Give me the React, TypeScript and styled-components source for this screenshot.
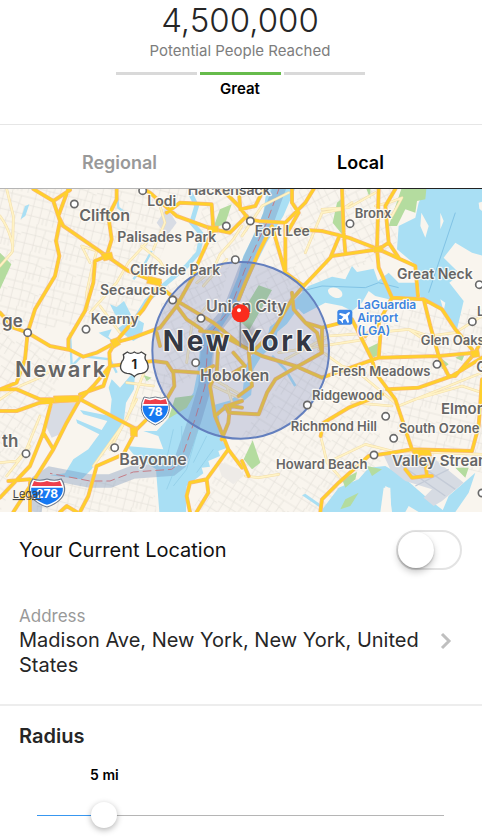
import React, { useState } from "react";
import styled, { createGlobalStyle } from "styled-components";

const GlobalStyle = createGlobalStyle`
  * { box-sizing: border-box; }
  body {
    margin: 0;
    background: #fff;
    color: #262626;
    font-family: Inter, Roboto, "Liberation Sans", sans-serif;
    overflow-x: hidden;
  }
  button, input { font: inherit; color: inherit; margin: 0; }
`;

const Page = styled.main`
  padding: 0 2px 20px 0;
`;

const Reach = styled.header`
  display: flex;
  flex-direction: column;
  align-items: center;
  height: 125px;
  padding-right: 2px;
  border-bottom: 1px solid #e6e6e6;
`;

const ReachCount = styled.h1`
  margin: 0;
  font-size: 33px;
  font-weight: 300;
  line-height: 40px;
`;

const ReachLabel = styled.p`
  margin: 0;
  color: #7d7d7d;
  font-size: 15px;
  line-height: 22px;
`;

const Meter = styled.div`
  display: grid;
  grid-template-columns: repeat(3, 81px);
  gap: 3px;
  margin-top: 10px;
`;

const MeterStep = styled.span<{ $on?: boolean }>`
  height: 3px;
  background: ${(p) => (p.$on ? "#66bb4b" : "#d9d9d9")};
`;

const Rating = styled.strong`
  margin-top: 4px;
  color: #000;
  font-size: 15px;
  font-weight: 600;
  line-height: 20px;
`;

const Tabs = styled.div`
  display: grid;
  grid-template-columns: 1fr 1fr;
`;

const Tab = styled.button<{ $active: boolean }>`
  height: 64px;
  padding: 12px 2px 0 0;
  border: 0;
  border-bottom: 1px solid ${(p) => (p.$active ? "#222" : "#b5b5b5")};
  background: none;
  color: ${(p) => (p.$active ? "#000" : "#999")};
  font-size: 18px;
  font-weight: 600;
  line-height: 24px;
`;

const MapFrame = styled.figure`
  margin: 0;
  line-height: 0;
`;

const MapDrawing = styled.svg`
  display: block;
  width: 100%;
  height: auto;
  background: #f9f5ee;

  text {
    paint-order: stroke;
    stroke: #fffdf8;
    stroke-opacity: 0.85;
    stroke-width: 7px;
    stroke-linejoin: round;
    fill: #666;
    font-weight: 600;
  }
`;

const Row = styled.label`
  display: flex;
  align-items: center;
  justify-content: space-between;
  height: 76px;
  padding: 0 20px 0 19px;
  color: #111;
  font-size: 20px;
`;

const Switch = styled.input`
  appearance: none;
  position: relative;
  width: 66px;
  height: 40px;
  border: 2px solid #e3e3e3;
  border-radius: 20px;
  background: #fff;

  &::after {
    content: "";
    display: block;
    width: 36px;
    height: 36px;
    border-radius: 50%;
    background: #fff;
    box-shadow: 0 4px 7px rgba(0, 0, 0, 0.22), 0 1px 2px rgba(0, 0, 0, 0.22);
  }
  &:checked { background: #66bb4b; border-color: #66bb4b; }
  &:checked::after { margin-left: 26px; }
`;

const AddressButton = styled.button`
  display: flex;
  align-items: center;
  justify-content: space-between;
  gap: 20px;
  width: 100%;
  padding: 16px 30px 26px 19px;
  border: 0;
  border-bottom: 2px solid #ededed;
  background: none;
  text-align: left;
`;

const AddressText = styled.span`
  display: flex;
  flex-direction: column;
  font-size: 20px;
  line-height: 25px;
`;

const FieldLabel = styled.span`
  color: #999;
  font-size: 17px;
  line-height: 24px;
`;

const Chevron = styled.svg`
  flex: none;
  width: 12px;
  height: 18px;
`;

const RadiusSection = styled.section`
  padding: 16px 20px 0 19px;
`;

const SectionTitle = styled.h2`
  margin: 0;
  font-size: 20px;
  font-weight: 600;
  line-height: 28px;
`;

const SliderBox = styled.div`
  position: relative;
  margin: 16px 18px 0 18px;
  padding-top: 19px;
`;

const SliderValue = styled.output`
  position: absolute;
  top: 0;
  transform: translateX(-50%);
  color: #000;
  font-size: 14px;
  font-weight: 600;
  line-height: 18px;
  white-space: nowrap;
`;

const Slider = styled.input`
  appearance: none;
  display: block;
  width: 100%;
  height: 61px;
  background: none;

  &::-webkit-slider-runnable-track {
    height: 1px;
    background:
      linear-gradient(#3897f0, #3897f0) left / var(--fill) 100% no-repeat,
      #b5b5b5;
  }
  &::-webkit-slider-thumb {
    appearance: none;
    width: 26px;
    height: 26px;
    margin-top: -13px;
    border-radius: 50%;
    background: #fff;
    box-shadow: 0 2px 6px rgba(0, 0, 0, 0.3);
  }
`;

/* Map geometry. The drawing uses three units to a pixel; EAST shifts the eastern half. */
const EAST = "translate(726 0)";

const westMinor = [
  "M0 90C30 130 45 190 35 200L0 240M20 9L40 90L38 190",
  "M460 190L495 110L480 60M440 170L385 230L350 290L270 380M425 180L480 225L500 260",
  "M270 230L245 180L290 195L275 250L260 320L262 370",
  "M590 290L640 250L660 205L700 160L726 120M610 300L680 220",
  "M0 640L60 600L130 570L165 540M0 830L50 825L90 780M20 870L75 800L120 690",
  "M280 840L380 700L420 590L440 540M380 590L460 600M330 790L410 640M300 360L360 440",
  "M640 600L726 640M650 585L720 625M680 600L700 660M560 530L575 420L620 360",
];
const eastMinor = [
  "M0 150L60 60L140 20M190 200L240 80L300 70L330 50M240 70L320 65L400 20",
  "M130 520L260 450L400 440L500 430L560 470M110 500L240 480L370 460",
  "M350 560L470 660L720 560M470 660L520 640L660 600L720 620",
  "M236 750L255 830L300 880M255 830L370 775L450 795M10 870L50 875L110 865",
  "M370 560L300 540L230 490M450 795L720 805M330 650L450 660",
  "M400 60L440 50L480 35L450 90L420 80M500 430L560 450L640 440L720 390",
];
const westRoads = [
  "M100 9L160 45L210 12M205 9L175 90L190 120L320 210L385 255L460 285L540 350L640 410L726 480",
  "M160 45L180 105L168 165L178 210L165 270L105 370L83 440L75 520L50 590L0 610",
  "M350 9L350 40L325 90L335 160L320 210L285 225L280 290L255 375L205 460L205 490",
  "M0 380L40 425L83 440L150 480L210 492L250 512L290 500L345 470L400 455L480 425L530 360L580 270L590 240L640 130",
  "M0 675L50 675L120 650L240 640L280 600L330 540L328 500L345 470L430 370L480 290",
  "M0 610L50 610L120 640L240 640L410 730L500 640L523 600L520 560L500 530L460 525L330 540",
  "M240 640L200 710L160 790L110 870L40 978M155 645L130 740L160 790M240 625L310 600L330 540",
  "M130 740L90 840L0 935M25 885L90 880L120 895M90 890L90 978M180 978L200 960L230 978",
  "M500 80L540 50L635 55L640 130L530 90L450 20L430 9M640 130L690 140L740 90",
  "M523 555L600 560L640 540M410 730L370 805L290 840L265 930L240 978",
  "M700 500L735 540L700 560M726 480L650 440L600 435M655 480L650 560L630 600L645 690L685 790",
  "M645 690L680 660L726 645M665 760L685 710L690 660L726 665",
  "M685 790L620 880L570 890L560 930L570 978M620 880L625 920L590 978M685 790L726 845",
  "M530 360L560 400L605 430M470 440L480 480",
];
const eastRoads = [
  "M-60 9L-10 60L20 100L50 105L130 110M-10 9L-5 70L40 60L65 9",
  "M215 9L190 50L130 110L130 260L185 300L270 210L410 190L320 155L240 135L160 130M150 50L170 80L130 150M150 9L150 50",
  "M300 9L305 140L310 200M410 9L405 190L410 245L450 335L545 340L600 370L640 430",
  "M460 9L430 60L440 170L410 190L520 240L528 330M290 155L265 215M440 170L470 215",
  "M130 260L90 120L50 200L10 290L-10 340M185 300L150 340L90 440L30 500",
  "M150 320L155 370L190 410L240 425L300 410L330 400L390 520L400 560L460 640L510 790",
  "M545 340L565 420L590 510L620 570L640 570L700 500L590 510L410 515L240 575L160 540L60 510L0 480",
  "M240 425L240 500L160 545L100 580L75 620L50 685L-40 680L-50 660",
  "M190 410L225 440L240 500M450 335L410 410L415 450L410 515M370 450L390 430",
  "M435 610L530 605L630 570L720 515M700 500L720 460M640 430L690 490M720 580L710 720L690 795",
  "M235 978L240 940L290 890L380 810L450 800L510 790L690 795M236 750L245 710L320 665L420 625",
  "M510 790L550 830L555 870L510 875L490 850M555 870L570 870",
  "M0 825L20 870M20 500L30 600L-10 630",
];

const West = () => (
  <g>
    <g fill="#a9dff4">
      <path d="M800 9H885L850 90L800 170L760 250L726 330L680 400L648 450L635 520L632 600L640 680L650 740L682 785L655 795L660 810L625 825L630 842L605 845L610 862L560 900L558 978H478L468 850L400 805L380 780L490 790L475 750L430 735L470 735L512 690L560 650L580 620L592 560L600 490L610 440L660 400L690 330L715 270L730 210L760 150L790 80Z" />
      <path d="M335 580L360 605L390 570L405 560L402 610L378 650L372 700L352 740L312 790L275 850L245 880L150 868L195 862L220 820L265 790L298 745L232 712L228 700L305 732L322 705L250 685L240 672L330 690L335 640L326 605Z" />
      <path d="M330 355L350 363L372 345L395 390L432 412L425 450L400 465L350 430L378 410L345 385Z" />
      <path d="M296 440L335 430L325 452L345 470L310 450ZM62 100L75 60L88 55L76 90Z" />
    </g>
    <g fill="none" stroke="#a9dff4">
      <path d="M570 20L590 60L575 110L605 145L595 200L560 240L500 290L440 345L412 390L405 440" strokeWidth="14" />
      <path d="M350 20L355 65L372 78M455 195L425 250L400 280M210 440L215 540L245 510L330 520L350 560" strokeWidth="7" />
    </g>
    <g fill="#b4dc9f">
      <path d="M0 200L34 235L0 310ZM660 70L695 55L675 115L640 125ZM525 635L582 628L560 665L505 698ZM430 567L455 575L440 585Z" />
    </g>
    <path d="M160 650L235 650L180 745L155 755L138 720ZM470 110L500 65L530 110L500 150Z" fill="#d8dce4" />
    <path d="M840 0L800 110L735 250L690 370L625 450L615 600L585 700L540 830L515 850L400 858L330 885L270 885L150 862L115 885L105 978" fill="none" stroke="#718fba" strokeOpacity=".36" strokeWidth="40" />
    <path d="M840 0L800 110L735 250L690 370L625 450L615 600L585 700L540 830L515 850L400 858L330 885L270 885L150 862" fill="none" stroke="#c67c86" strokeWidth="3" strokeDasharray="26 12" />
    <path d="M545 720V800L500 910M600 710L560 850L520 900M620 750L580 830M520 730L495 840M640 790L590 860" fill="none" stroke="#8dcae5" strokeWidth="2" />
  </g>
);

const EastHalf = () => (
  <g transform={EAST}>
    <g fill="#a9dff4">
      <path d="M550 9H726V210L690 200L640 170L605 215L655 265L622 290L665 345L645 430L600 375L535 335L525 240L465 190L470 120L520 95L530 50Z" />
      <path d="M150 350L200 300L270 272L310 280L330 240L345 258L395 248L408 285L440 260L470 290L528 290L530 345L450 342L400 330L380 315L360 350L330 375L300 360L250 350L185 385Z" />
      <path d="M235 978L290 905L350 880L380 845L430 840L480 870L560 940L610 978H530L500 960L490 978H450L440 905L430 900L425 978Z" />
      <path d="M620 930L700 860L680 920L640 978H600ZM180 928L190 923L235 955V965Z" />
    </g>
    <path d="M165 350L125 405L95 430L85 470L50 500L22 545L15 620L-30 655L-82 670L-80 760" fill="none" stroke="#a9dff4" strokeWidth="26" />
    <path d="M90 510L130 550L160 600" fill="none" stroke="#a9dff4" strokeWidth="8" />
    <path d="M640 80L560 320M180 315L240 300L370 305L410 290L470 305" fill="none" stroke="#81c3e5" strokeWidth="3" />
    <g fill="#f9f5ee">
      <path d="M538 80L560 120L550 155L535 120ZM595 80L605 105L595 130ZM710 50L726 45V80L712 68ZM258 312C270 295 308 310 300 330C290 345 256 330 258 312ZM595 340L610 350L605 375Z" />
      <path d="M425 905L445 905L448 978H415Z" />
    </g>
    <g fill="#b4dc9f">
      <path d="M50 298L90 312L22 432L-12 400ZM32 763L55 830L30 850L5 820ZM285 50L302 35L300 145L272 110ZM478 9H553L550 40L525 45L520 80L490 70L465 120L440 120ZM370 490L410 470L412 505L385 520ZM590 510L620 535L600 550ZM640 515L670 500L660 525Z" />
      <path d="M300 880L345 858L340 880L310 905ZM375 840L420 850L390 870ZM310 940L350 920L325 960L295 970ZM640 845L680 845L670 875ZM370 0H385V40Z" />
    </g>
    <path d="M425 808L560 805L665 890L600 945L575 960L545 935L570 910L490 885L445 850Z" fill="#d6dbe3" />
    <path d="M460 825L610 930M500 815L640 910M520 900L620 850" stroke="#c4cbd7" strokeWidth="4" />
  </g>
);

const streetAreas = [
  { d: "M0 9H570L400 400L0 440Z", id: "streets-a" },
  { d: "M0 440L200 500L140 700L0 978Z", id: "streets-b" },
  { d: "M480 310L700 200L600 560L500 620ZM620 9H800L700 230L560 280Z", id: "streets-c" },
  { d: "M110 900L460 875L470 978H110ZM300 820L450 540L520 580L480 680Z", id: "streets-a" },
  { d: "M900 9H1190V200L900 310L700 580L650 560L690 420Z", id: "streets-c" },
  { d: "M570 978L700 790L760 700L950 440L1090 410L1150 820L960 978Z", id: "streets-b" },
  { d: "M1100 360L1446 370V860L1180 800Z", id: "streets-a" },
];

const RoadSet = ({ paths, major }: { paths: string[]; major: boolean }) => (
  <g fill="none" strokeLinejoin="round" strokeLinecap="round">
    <path d={paths.join("")} stroke={major ? "#f8b878" : "#f2dca9"} strokeWidth={major ? 12 : 8} />
    <path d={paths.join("")} stroke={major ? "#ffd02b" : "#fff3c5"} strokeWidth={major ? 8 : 5} />
  </g>
);

type Place = [name: string, x: number, y: number, size: number];
const places: Place[] = [
  ["Hackensack", 563, 26, 42], ["Lodi", 442, 61, 42], ["Clifton", 238, 106, 48],
  ["Palisades Park", 352, 167, 42], ["Cliffside Park", 390, 268, 42], ["Secaucus", 300, 326, 42],
  ["Kearny", 272, 413, 42], ["Bayonne", 358, 837, 48], ["Union City", 618, 378, 48],
  ["Hoboken", 600, 584, 48], ["Bronx", 1064, 97, 39], ["Fort Lee", 764, 150, 42],
  ["Great Neck", 1191, 279, 42], ["Glen Oaks", 1262, 477, 39], ["Fresh Meadows", 993, 570, 39],
  ["Ridgewood", 936, 641, 39], ["Richmond Hill", 872, 735, 39], ["South Ozone", 1196, 742, 39],
  ["Elmont", 1323, 684, 45], ["Valley Stream", 1176, 841, 45], ["Howard Beach", 828, 850, 39],
  ["L", 1431, 390, 39], ["G", 1429, 558, 42], ["ge", 6, 422, 51], ["th", 6, 783, 51],
];

const towns = [
  [223, 54], [428, 14], [679, 120], [706, 221], [518, 342], [603, 397], [83, 440], [258, 430],
  [587, 530], [344, 785], [78, 803], [751, 105], [1050, 113], [1438, 296], [1417, 407],
  [1311, 535], [922, 657], [1157, 691], [1181, 757], [1122, 807], [1446, 921],
];

const CityText = styled.text`
  && { letter-spacing: 5px; }
`;
const Metropolis = styled.text`
  && { font-weight: 700; letter-spacing: 8px; fill: #343743; }
`;
const AirportText = styled.text`
  && { fill: #3d84e0; }
`;
const LegalText = styled.text`
  && { stroke: none; fill: #444; font-weight: 400; text-decoration: underline; }
`;
const ShieldText = styled.text<{ $light?: boolean }>`
  && { stroke: none; fill: ${(p) => (p.$light ? "#fff" : "#222")}; font-weight: 700; }
`;

const Interstate = ({ x, y, wide, num }: { x: number; y: number; wide?: boolean; num: string }) => (
  <g transform={`translate(${x} ${y})`}>
    <g transform={wide ? "scale(1.25 1)" : undefined}>
      <path d="M-34-41Q-18-34 0-41Q18-34 34-41Q43-25 42-6C40 20 20 34 0 43C-20 34-40 20-42-6Q-43-25-34-41Z" fill="#fff" stroke="#6f7b8c" strokeWidth="3" />
      <path d="M-31-35Q-16-28 0-35Q16-28 31-35L36-20H-36Z" fill="#ee3f4b" />
      <path d="M-38-15H38C40 13 20 28 0 36C-20 28-40 13-38-15Z" fill="#1679f2" />
    </g>
    <ShieldText $light y="15" textAnchor="middle" fontSize="36">{num}</ShieldText>
  </g>
);

const NewYorkMap = () => (
  <MapDrawing viewBox="0 9 1446 969" role="img" aria-label="Map of New York with a five mile radius">
    <defs>
      {[["streets-a", 14], ["streets-b", 32], ["streets-c", -28]].map(([id, turn]) => (
        <pattern key={id} id={String(id)} width="96" height="84" patternUnits="userSpaceOnUse" patternTransform={`rotate(${turn})`}>
          <path d="M0 12H96M0 35H60L96 42M0 64H96M16 0V84M40 0L43 35V84M70 12L66 64V84M86 42V84M54 64V84" fill="none" stroke="#e3dfd8" strokeWidth="2" />
        </pattern>
      ))}
      <radialGradient id="pin-shadow"><stop offset="0" stopColor="#333" stopOpacity=".4" /><stop offset="1" stopColor="#333" stopOpacity="0" /></radialGradient>
    </defs>

    {streetAreas.map((a) => <path key={a.d} d={a.d} fill={`url(#${a.id})`} />)}
    <path d="M650 825L720 850L730 870L700 895L665 870Z" fill="#eeebe7" />
    <West />
    <EastHalf />
    <RoadSet paths={westMinor} major={false} />
    <g transform={EAST}><RoadSet paths={eastMinor} major={false} /></g>
    <RoadSet paths={westRoads} major />
    <g transform={EAST}><RoadSet paths={eastRoads} major /></g>
    <g fill="#ffd02b" stroke="#f8b878" strokeWidth="2">
      <path d="M302 203L335 198L340 218L312 225ZM330 462L350 455L362 475L340 488ZM445 270L485 280L480 300L440 292ZM160 630L240 628L238 648L165 650ZM622 120L655 120L655 138L625 142ZM390 725L412 722L412 752L392 750ZM1235 790L1290 790L1295 810L1240 808ZM1120 183L1148 178L1150 198L1122 200ZM1410 495L1436 490L1440 512L1415 515Z" />
    </g>

    <circle cx="722" cy="493" r="265" fill="#5d70ba" fillOpacity=".24" stroke="#637fbe" strokeWidth="6" />

    {towns.map(([x, y]) => <circle key={`${x}-${y}`} cx={x} cy={y} r="11" fill="#fff" stroke="#696969" strokeWidth="5" />)}
    {places.map(([name, x, y, size]) => <text key={name} x={x} y={y} fontSize={size}>{name}</text>)}
    <CityText x="45" y="574" fontSize="66">Newark</CityText>

    <rect x="1012" y="371" width="45" height="45" rx="8" fill="#3e87e8" />
    <g transform="translate(1035 393) rotate(45)">
      <path d="M0-20C3-20 4-14 4-8L19 2V7L4 3L3 12L8 16V19L0 17L-8 19V16L-3 12L-4 3L-19 7V2L-4-8C-4-14-3-20 0-20Z" fill="#fff" />
    </g>
    <AirportText x="1072" y="369" fontSize="36">LaGuardia</AirportText>
    <AirportText x="1072" y="408" fontSize="36">Airport</AirportText>
    <AirportText x="1072" y="447" fontSize="36">(LGA)</AirportText>

    <path d="M370 506L382 498Q392 506 403 498Q414 506 424 498L437 506Q432 518 440 526C450 546 442 560 425 562Q410 563 403 572Q396 563 381 562C364 560 356 546 366 526Q374 518 370 506Z" fill="#fff" stroke="#444" strokeWidth="4" />
    <ShieldText x="403" y="549" fontSize="39" textAnchor="middle">1</ShieldText>
    <Interstate x={466} y={674} num="78" />
    <Interstate x={141} y={920} num="278" wide />
    <LegalText x="38" y="936" fontSize="33">Legal</LegalText>

    <ellipse cx="745" cy="455" rx="34" ry="48" fill="url(#pin-shadow)" />
    <Metropolis x="488" y="494" fontSize="84">New York</Metropolis>
    <path d="M721 400V482" stroke="#8d9099" strokeWidth="5" />
    <circle cx="722" cy="382" r="27" fill="#fb2c1d" />
    <circle cx="717" cy="373" r="6" fill="#fff" />
  </MapDrawing>
);

const MAX_RADIUS = 35;

export default function App() {
  const [tab, setTab] = useState("Local");
  const [radius, setRadius] = useState(5);
  const ratio = radius / MAX_RADIUS;
  const thumbCentre = `calc(13px + (100% - 26px) * ${ratio})`;

  return (
    <Page>
      <GlobalStyle />
      <Reach>
        <ReachCount>4,500,000</ReachCount>
        <ReachLabel>Potential People Reached</ReachLabel>
        <Meter aria-hidden="true">
          <MeterStep />
          <MeterStep $on />
          <MeterStep />
        </Meter>
        <Rating>Great</Rating>
      </Reach>

      <Tabs role="tablist">
        {["Regional", "Local"].map((name) => (
          <Tab key={name} role="tab" aria-selected={tab === name} $active={tab === name} onClick={() => setTab(name)}>
            {name}
          </Tab>
        ))}
      </Tabs>

      <MapFrame><NewYorkMap /></MapFrame>

      <Row htmlFor="current-location">
        Your Current Location
        <Switch id="current-location" type="checkbox" role="switch" />
      </Row>

      <AddressButton type="button">
        <AddressText>
          <FieldLabel>Address</FieldLabel>
          Madison Ave, New York, New York, United States
        </AddressText>
        <Chevron viewBox="0 0 12 18" aria-hidden="true">
          <path d="M2 2L9 9L2 16" fill="none" stroke="#bfbfbf" strokeWidth="3" />
        </Chevron>
      </AddressButton>

      <RadiusSection>
        <SectionTitle id="radius-title">Radius</SectionTitle>
        <SliderBox>
          <SliderValue htmlFor="radius" style={{ left: thumbCentre }}>{radius} mi</SliderValue>
          <Slider
            id="radius"
            type="range"
            min={0}
            max={MAX_RADIUS}
            value={radius}
            aria-labelledby="radius-title"
            onChange={(e) => setRadius(Number(e.target.value))}
            style={{ "--fill": thumbCentre } as React.CSSProperties}
          />
        </SliderBox>
      </RadiusSection>
    </Page>
  );
}
